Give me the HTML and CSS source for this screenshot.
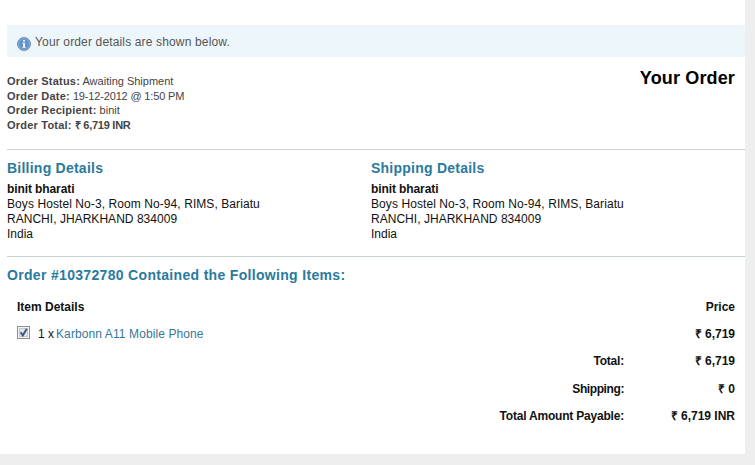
FILE: index.html
```html
<!DOCTYPE html>
<html lang="en">

<head>
    <meta charset="UTF-8">
    <meta name="viewport" content="width=device-width, initial-scale=1.0">
    <title>Your Order</title>
    <link rel="stylesheet" href="styles.css">
</head>

<body>
    <div class="page">
        <div class="message">
            <svg class="info-icon" width="14" height="14" viewBox="0 0 14 14">
                <circle cx="7" cy="7" r="6.4" fill="#5f93cd" stroke="#6a82a3" stroke-width="1" />
                <circle cx="7" cy="7" r="5.5" fill="none" stroke="#94b8e0" stroke-width="0.8" />
                <path d="M6.1 3h1.8v1.6H6.1zM5.5 5.8h2.4v4h.8v.9H5.4v-.9h.8V6.7h-.7z" fill="#fff" />
            </svg>
            <span class="message-text">Your order details are shown below.</span>
        </div>

        <div class="summary">
            <div class="order-info">
                <div><b>Order Status:</b> <span>Awaiting Shipment</span></div>
                <div><b>Order Date:</b> <span class="date">19-12-2012 @ 1:50 PM</span></div>
                <div><b>Order Recipient:</b> <span>binit</span></div>
                <div><b>Order Total:</b> <strong>₹ 6,719 INR</strong></div>
            </div>
            <h1>Your Order</h1>
        </div>

        <div class="addresses">
            <div class="address">
                <h2>Billing Details</h2>
                <b>binit bharati</b>
                <div class="street">Boys Hostel No-3, Room No-94, RIMS, Bariatu</div>
                <div class="city">RANCHI, JHARKHAND 834009</div>
                <div>India</div>
            </div>
            <div class="address">
                <h2>Shipping Details</h2>
                <b>binit bharati</b>
                <div class="street">Boys Hostel No-3, Room No-94, RIMS, Bariatu</div>
                <div class="city">RANCHI, JHARKHAND 834009</div>
                <div>India</div>
            </div>
        </div>

        <div class="items">
            <h2 class="items-title">Order #10372780 Contained the Following Items:</h2>
            <div class="row">
                <b class="item-head">Item Details</b>
                <b class="price">Price</b>
            </div>
            <div class="row">
                <div class="item">
                    <svg class="check" width="13" height="13" viewBox="0 0 13 13">
                        <rect x="0.5" y="0.5" width="12" height="12" fill="#f4f4f4" stroke="#8e8f8f" />
                        <rect x="2.5" y="2.5" width="8" height="8" fill="#dfe4ea" stroke="#c3c9d0" />
                        <path d="M3.6 6.2l2.2 3.2 4-6.6" fill="none" stroke="#3b5585" stroke-width="1.9" />
                    </svg>
                    <span class="qty">1 x</span>
                    <a class="product" href="#">Karbonn A11 Mobile Phone</a>
                </div>
                <b class="price">₹ 6,719</b>
            </div>
            <div class="row">
                <b class="label">Total:</b>
                <b class="price">₹ 6,719</b>
            </div>
            <div class="row">
                <b class="label shipping">Shipping:</b>
                <b class="price">₹ 0</b>
            </div>
            <div class="row">
                <b class="label">Total Amount Payable:</b>
                <b class="price">₹ 6,719 INR</b>
            </div>
        </div>
    </div>
</body>

</html>
```

FILE: styles.css
```css
body {
    font-family: "Liberation Sans", Arial, sans-serif;
    font-size: 12px;
    line-height: 15px;
    color: #111;
    background-color: #eee;
    margin: 0;
    padding: 0;
}

.page {
    box-sizing: border-box;
    width: 745px;
    height: 454px;
    padding: 25px 0 0 7px;
    background-color: #fff;
}

.message {
    display: flex;
    align-items: center;
    height: 32px;
    padding-left: 10px;
    background-color: #edf7fb;
    color: #555;
}

.info-icon {
    margin: 5px 4px 0 0;
}

.message-text {
    padding-top: 2px;
    letter-spacing: 0.15px;
}

.summary {
    display: flex;
    justify-content: space-between;
    box-sizing: border-box;
    height: 93px;
    padding: 17px 10px 0 0;
    border-bottom: 1px solid #cdd3d3;
}

.order-info {
    font-size: 11px;
    line-height: 14.67px;
    color: #444;
}

.order-info b {
    letter-spacing: 0.21px;
}

.order-info .date {
    letter-spacing: -0.16px;
}

.order-info strong {
    letter-spacing: -0.25px;
}

h1 {
    margin: -7px 0 0;
    font-size: 18px;
    line-height: 22px;
    letter-spacing: 0.15px;
    color: #000;
}

h2 {
    margin: 0 0 4px;
    font-size: 14px;
    line-height: 18px;
    letter-spacing: 0.24px;
    color: #2a7a9e;
}

.addresses {
    display: grid;
    grid-template-columns: 364px 1fr;
    box-sizing: border-box;
    height: 107px;
    padding-top: 9px;
    border-bottom: 1px solid #c3d5cf;
}

.address h2 {
    margin-bottom: 5px;
}

.address b {
    letter-spacing: -0.1px;
}

.street {
    letter-spacing: 0.08px;
}

.city {
    letter-spacing: 0.03px;
}

.items {
    padding: 9px 10px 0 0;
}

.items-title {
    margin-bottom: 14px;
    letter-spacing: 0.32px;
}

.row {
    display: flex;
    justify-content: space-between;
    height: 27.2px;
    line-height: 18px;
    padding-left: 10px;
}

.item {
    display: flex;
}

.check {
    margin: 1px 8px 0 0;
}

.qty {
    margin-right: 2px;
}

.product {
    letter-spacing: 0.1px;
    color: #35789a;
    text-decoration: none;
}

.label {
    flex: 1;
    text-align: right;
    letter-spacing: -0.2px;
}

.shipping {
    letter-spacing: -0.4px;
}

.price {
    width: 111px;
    text-align: right;
}
```
